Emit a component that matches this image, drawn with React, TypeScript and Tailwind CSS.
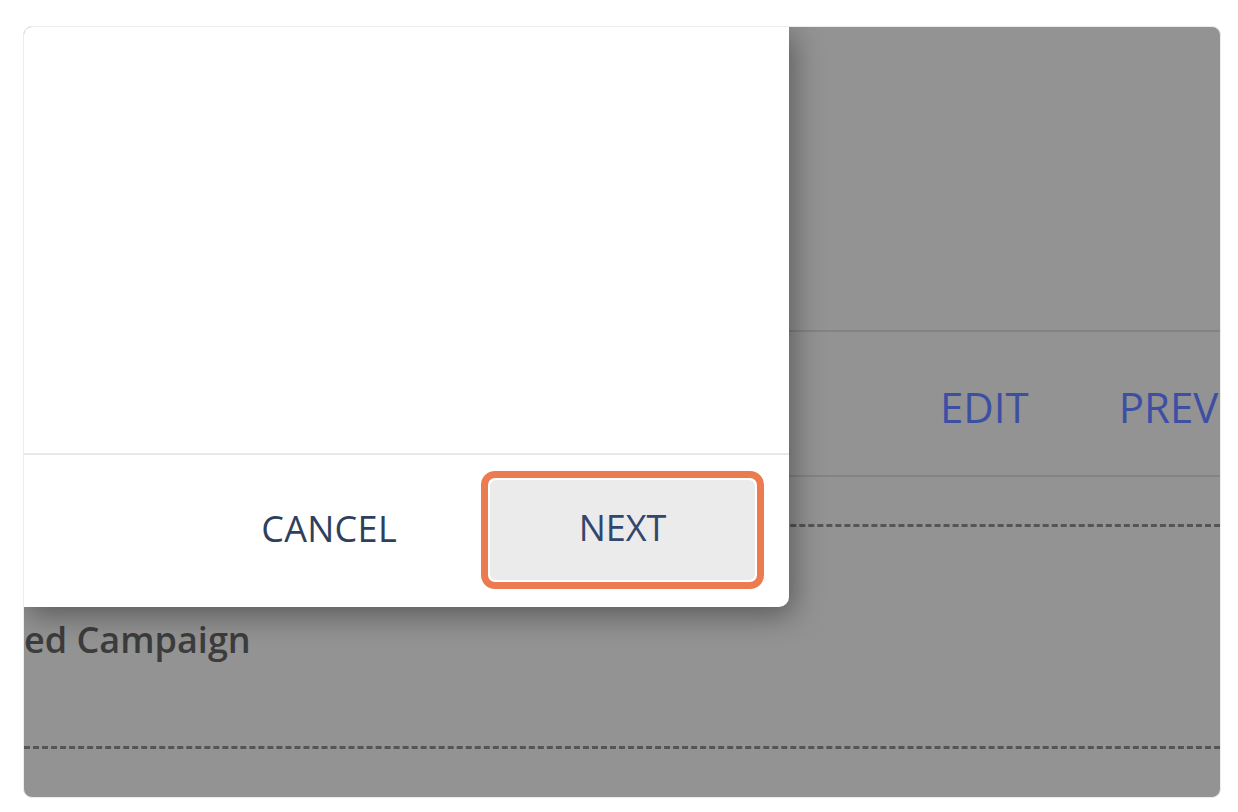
import React from "react";

export default function App() {
  const font = { fontFamily: '"Open Sans", "Noto Sans", sans-serif' };
  return (
    <div className="w-[1238px] h-[812px] bg-white pt-[26px] pl-[23px]" style={font}>
      <div className="relative w-[1198px] h-[772px] rounded-[9px] border border-[#ececec] overflow-hidden bg-[#939393]">
        {/* background page under the overlay */}
        <div className="flex flex-col w-full h-full">
          <div className="h-[303px] shrink-0" />
          <div className="h-[2px] shrink-0 bg-[#838383]" />
          <div className="h-[143px] shrink-0 flex items-center pl-[916px] pt-[6px] gap-[90px] whitespace-nowrap overflow-hidden">
            <span className="text-[42px] leading-none text-[#3d4fa3]">EDIT</span>
            <span className="text-[42px] leading-none text-[#3d4fa3]">PREV</span>
          </div>
          <div className="h-[2px] shrink-0 bg-[#848484]" />
          <div className="h-[47px] shrink-0" />
          <div className="h-0 shrink-0 border-t-[3px] border-dashed border-[#555555]" />
          <div className="h-[219px] shrink-0 flex items-center pt-[6px]">
            <span className="text-[36px] font-semibold leading-none text-[#3c3c3c] whitespace-nowrap">ed Campaign</span>
          </div>
          <div className="h-0 shrink-0 border-t-[3px] border-dashed border-[#555555]" />
        </div>

        {/* modal */}
        <div className="absolute top-0 left-0 w-[765px] h-[580px] bg-white rounded-br-[10px] shadow-[4px_8px_30px_rgba(0,0,0,0.4)] flex flex-col">
          <div className="h-[426px] shrink-0" />
          <div className="h-[2px] shrink-0 bg-[#e8e8e8]" />
          <div className="flex-1 flex items-center justify-end pr-[25px] gap-[84px]">
            <button className="text-[36px] leading-none text-[#2f3f5e] tracking-[0.3px] pb-[5px]">CANCEL</button>
            <div className="rounded-[14px] border-[7px] border-[#ec7b50] p-[2px] bg-white mb-[2px]">
              <button className="w-[265px] h-[100px] rounded-[6px] bg-[#ebebeb] text-[36px] leading-none text-[#33466b] pb-[4px]">
                NEXT
              </button>
            </div>
          </div>
        </div>
      </div>
    </div>
  );
}
